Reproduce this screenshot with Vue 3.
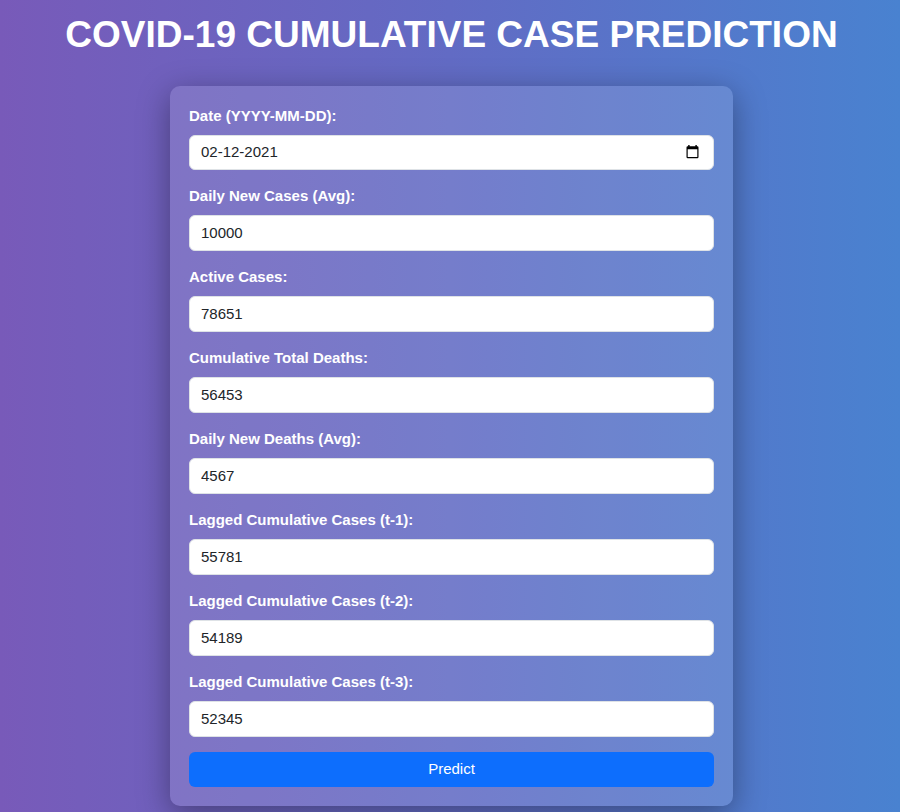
<script setup>
import { ref } from 'vue'

const date = ref('02-12-2021')
const fields = ref([
  { id: 'new-cases', label: 'Daily New Cases (Avg):', value: '10000' },
  { id: 'active', label: 'Active Cases:', value: '78651' },
  { id: 'deaths', label: 'Cumulative Total Deaths:', value: '56453' },
  { id: 'new-deaths', label: 'Daily New Deaths (Avg):', value: '4567' },
  { id: 'lag-1', label: 'Lagged Cumulative Cases (t-1):', value: '55781' },
  { id: 'lag-2', label: 'Lagged Cumulative Cases (t-2):', value: '54189' },
  { id: 'lag-3', label: 'Lagged Cumulative Cases (t-3):', value: '52345' },
])
</script>

<template>
  <main class="page">
    <h1 class="title">COVID-19 CUMULATIVE CASE PREDICTION</h1>
    <form class="card" @submit.prevent>
      <div class="field">
        <label class="label" for="date">Date (YYYY-MM-DD):</label>
        <div class="control date">
          <input id="date" v-model="date" class="bare" type="text" />
          <button class="picker" type="button" aria-label="Open calendar">
            <svg width="13" height="15" viewBox="0 0 13 15" aria-hidden="true">
              <path fill="#000" fill-rule="evenodd" d="M2.200 1h1.400v1.200h5.800V1h1.400v1.200h0.500q1.200 0 1.200 1.200v9.600q0 1.200-1.200 1.200H1.700Q0.500 14.200 0.500 13V3.400Q0.500 2.200 1.700 2.200h0.500zM1.700 5.300v7.700h9.600V5.300z" />
            </svg>
          </button>
        </div>
      </div>
      <div v-for="f in fields" :key="f.id" class="field">
        <label class="label" :for="f.id">{{ f.label }}</label>
        <input :id="f.id" v-model="f.value" class="control" type="text" inputmode="numeric" />
      </div>
      <button class="submit" type="submit">Predict</button>
    </form>
  </main>
</template>

<style>
body {
  margin: 0;
}
</style>

<style scoped>
.page {
  box-sizing: border-box;
  min-height: 100vh;
  padding: 12px 16px 6px 19px;
  background: linear-gradient(to right, #785ab9, #626bc4 50%, #4982d0);
  font-family: "Liberation Sans", Arial, sans-serif;
  font-size: 15px;
}
.title {
  margin: 0 0 28px;
  color: #fff;
  font-size: 37px;
  line-height: 46px;
  text-align: center;
}
.card {
  box-sizing: border-box;
  max-width: 563px;
  margin: 0 auto;
  padding: 19px;
  border-radius: 10px;
  background: rgba(255, 255, 255, 0.12);
  box-shadow: 0 8px 32px rgba(0, 0, 0, 0.37);
}
.field {
  margin-bottom: 15px;
}
.label {
  display: block;
  margin-bottom: 8px;
  color: #fff;
  font-weight: bold;
  line-height: 22px;
}
.control {
  display: block;
  box-sizing: border-box;
  width: 100%;
  height: 36px;
  padding: 0 11px 2px;
  border: 1px solid #dee2e6;
  border-radius: 6px;
  background: #fff;
  color: #212529;
  font: inherit;
}
.date {
  display: flex;
  align-items: center;
  height: 35px;
  padding-right: 14px;
}
.bare {
  flex: 1;
  min-width: 0;
  padding: 0;
  border: 0;
  outline: 0;
  background: none;
  color: inherit;
  font: inherit;
}
.picker {
  display: flex;
  padding: 0;
  border: 0;
  background: none;
}
.submit {
  display: block;
  width: 100%;
  height: 35px;
  padding: 0 0 2px;
  border: 0;
  border-radius: 6px;
  background: #0d6efd;
  color: #fff;
  font: inherit;
}
</style>
